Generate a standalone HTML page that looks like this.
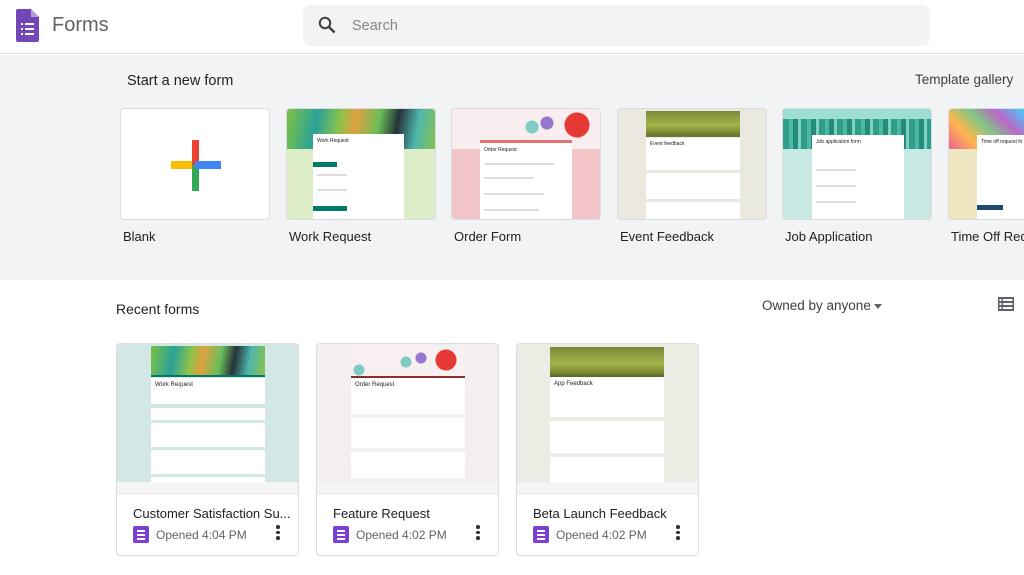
<!DOCTYPE html>
<html><head><meta charset="utf-8"><style>
*{margin:0;padding:0;box-sizing:border-box}
body{width:1024px;height:575px;overflow:hidden;background:#fff;font-family:"Liberation Sans",Arial,sans-serif;position:relative;color:#202124}
.a{position:absolute}
.tc{position:absolute;top:108px;width:150px;height:112px;border-radius:4px;overflow:hidden;border:1px solid #dadce0;background:#fff}
.tl{position:absolute;top:229px;font-size:13px;color:#202124}
.paper{position:absolute;background:#fff}
.ln{position:absolute;height:2px;background:#ddd}
.rc{position:absolute;top:343px;width:183px;height:213px;border:1px solid #dadce0;border-radius:4px;overflow:hidden;background:#fff}
.rt{position:absolute;left:0;top:0;width:100%;height:138px}
.strip{position:absolute;left:0;top:138px;width:100%;height:12px;background:#f5f5f5;border-bottom:1px solid #e8e8e8}
.rn{position:absolute;left:16px;top:162px;font-size:13px;color:#202124;white-space:nowrap}
.ic{position:absolute;left:16px;top:182px;width:16px;height:17px;background:#7b3fd4;border-radius:2px}
.ic i{position:absolute;left:4px;width:8px;height:2px;background:#fff}
.op{position:absolute;left:39px;top:184px;font-size:12px;color:#5f6368}
.dots{position:absolute;left:159px;top:181px;width:4px}
.dots b{display:block;width:3.5px;height:3.5px;border-radius:50%;background:#333;margin-bottom:2px}
</style></head><body>
<div class="a" style="left:0;top:0;width:1024px;height:54px;border-bottom:1px solid #e0e0e0"></div>
<svg class="a" style="left:16px;top:9px" width="23" height="33" viewBox="0 0 23 33"><path d="M2 0h13l8 8v23a2 2 0 0 1-2 2H2a2 2 0 0 1-2-2V2a2 2 0 0 1 2-2z" fill="#7248b9"/><path d="M15 0v8h8z" fill="#b39ddb"/><g fill="#fff"><rect x="5" y="14" width="2" height="2"/><rect x="9" y="14" width="9" height="2"/><rect x="5" y="19" width="2" height="2"/><rect x="9" y="19" width="9" height="2"/><rect x="5" y="24" width="2" height="2"/><rect x="9" y="24" width="9" height="2"/></g></svg>
<div class="a" style="left:52px;top:14px;font-size:20px;color:#5f6368">Forms</div>
<div class="a" style="left:303px;top:5px;width:627px;height:41px;background:#f1f3f4;border-radius:8px"></div>
<svg class="a" style="left:318px;top:16px" width="18" height="18" viewBox="0 0 18 18"><circle cx="7" cy="7" r="5.2" fill="none" stroke="#3c4043" stroke-width="2"/><path d="M11 11l5.5 5.5" stroke="#3c4043" stroke-width="2.4"/></svg>
<div class="a" style="left:352px;top:18px;font-size:14.5px;color:#80868b">Search</div>
<div class="a" style="left:0;top:55px;width:1024px;height:225px;background:#f1f3f4"></div>
<div class="a" style="left:127px;top:73px;font-size:14.5px;color:#202124">Start a new form</div>
<div class="a" style="left:915px;top:72px;font-size:13.5px;color:#3c4043">Template gallery</div>

<div class="tc" style="left:120px">
<div class="a" style="left:71px;top:31px;width:7px;height:25px;background:#ea4335"></div>
<div class="a" style="left:71px;top:56px;width:7px;height:26px;background:#34a853"></div>
<div class="a" style="left:50px;top:52px;width:21px;height:8px;background:#fbbc04"></div>
<div class="a" style="left:74px;top:52px;width:26px;height:8px;background:#4285f4"></div>
</div>
<div class="tl" style="left:123px">Blank</div>

<div class="tc" style="left:286px;background:#dcedc8">
<div class="a" style="left:0;top:0;width:150px;height:40px;background:linear-gradient(100deg,#7cc243 0,#2aa198 20%,#8bc34a 35%,#e0a040 45%,#6bbf59 60%,#263238 72%,#4db6ac 85%,#8bc34a 100%)"></div>
<div class="paper" style="left:26px;top:25px;width:91px;height:90px"><div class="a" style="left:4px;top:4px;font-size:5px">Work Request</div><div class="a" style="left:0;top:28px;width:24px;height:5px;background:#00796b"></div><div class="ln" style="left:4px;top:40px;width:30px"></div><div class="ln" style="left:4px;top:55px;width:30px"></div><div class="a" style="left:0;top:72px;width:34px;height:5px;background:#00796b"></div></div>
</div>
<div class="tl" style="left:289px">Work Request</div>

<div class="tc" style="left:451px;background:#f2c6c8">
<div class="a" style="left:0;top:0;width:150px;height:40px;background:radial-gradient(circle at 125px 16px,#e53935 0 12px,transparent 13px),radial-gradient(circle at 80px 18px,#80cbc4 0 6px,transparent 7px),radial-gradient(circle at 95px 14px,#9575cd 0 6px,transparent 7px),#f8eef0"></div>
<div class="a" style="left:28px;top:31px;width:92px;height:3px;background:#e57373"></div>
<div class="paper" style="left:28px;top:34px;width:92px;height:80px"><div class="a" style="left:4px;top:4px;font-size:5px">Order Request</div><div class="ln" style="left:4px;top:20px;width:70px"></div><div class="ln" style="left:4px;top:34px;width:50px"></div><div class="ln" style="left:4px;top:50px;width:60px"></div><div class="ln" style="left:4px;top:66px;width:55px"></div></div>
</div>
<div class="tl" style="left:454px">Order Form</div>

<div class="tc" style="left:617px;background:#ebe9df">
<div class="a" style="left:28px;top:2px;width:94px;height:24px;background:linear-gradient(180deg,#7a8a3a,#a4b54a 60%,#6b7a2c)"></div>
<div class="a" style="left:28px;top:26px;width:94px;height:2px;background:#6b7a2c"></div>
<div class="paper" style="left:28px;top:29px;width:94px;height:32px"><div class="a" style="left:4px;top:3px;font-size:5px">Event feedback</div></div>
<div class="paper" style="left:28px;top:64px;width:94px;height:26px"></div>
<div class="paper" style="left:28px;top:93px;width:94px;height:20px"></div>
</div>
<div class="tl" style="left:620px">Event Feedback</div>

<div class="tc" style="left:782px;background:#c8e8e3">
<div class="a" style="left:0;top:0;width:150px;height:40px;background:repeating-linear-gradient(90deg,#2e9e8a 0 6px,#4db6a4 6px 10px,#238c78 10px 15px,#7fd0c0 15px 18px)"></div>
<div class="a" style="left:0;top:0;width:150px;height:10px;background:#9fded2"></div>
<div class="paper" style="left:29px;top:26px;width:92px;height:90px"><div class="a" style="left:4px;top:4px;font-size:5px">Job application form</div><div class="ln" style="left:4px;top:34px;width:40px"></div><div class="ln" style="left:4px;top:50px;width:40px"></div><div class="ln" style="left:4px;top:66px;width:40px"></div></div>
</div>
<div class="tl" style="left:785px">Job Application</div>

<div class="tc" style="left:948px;width:90px;background:#efe6c2">
<div class="a" style="left:0;top:0;width:90px;height:40px;background:linear-gradient(45deg,#f06292,#ffb74d 25%,#81c784 45%,#ba68c8 65%,#4fc3f7 85%,#e57373)"></div>
<div class="paper" style="left:28px;top:26px;width:62px;height:90px"><div class="a" style="left:4px;top:4px;font-size:5px;white-space:nowrap">Time off request fo</div><div class="a" style="left:0;top:70px;width:26px;height:5px;background:#1e4a6b"></div></div>
</div>
<div class="tl" style="left:951px;white-space:nowrap">Time Off Req</div>

<div class="a" style="left:116px;top:301px;font-size:14px;color:#202124">Recent forms</div>
<div class="a" style="left:762px;top:298px;font-size:13.5px;color:#3c4043">Owned by anyone</div>
<div class="a" style="left:874px;top:304px;border-left:4.5px solid transparent;border-right:4.5px solid transparent;border-top:5px solid #5f6368"></div>
<svg class="a" style="left:998px;top:297px" width="16" height="14" viewBox="0 0 16 14"><rect x="0" y="0" width="16" height="14" fill="#5f6368"/><g fill="#fff"><rect x="1.5" y="2" width="2" height="2"/><rect x="5" y="2" width="9.5" height="2"/><rect x="1.5" y="6" width="2" height="2"/><rect x="5" y="6" width="9.5" height="2"/><rect x="1.5" y="10" width="2" height="2"/><rect x="5" y="10" width="9.5" height="2"/></g></svg>

<div class="rc" style="left:116px">
<div class="rt" style="background:#d3e8e5"></div>
<div class="a" style="left:34px;top:2px;width:114px;height:29px;background:linear-gradient(100deg,#7cc243 0,#2aa198 20%,#8bc34a 35%,#e0a040 45%,#6bbf59 60%,#263238 72%,#4db6ac 85%,#8bc34a 100%)"></div>
<div class="a" style="left:34px;top:31px;width:114px;height:2px;background:#00796b"></div>
<div class="paper" style="left:34px;top:34px;width:114px;height:26px"><div class="a" style="left:4px;top:4px;font-size:6px">Work Request</div></div>
<div class="paper" style="left:34px;top:64px;width:114px;height:12px"></div>
<div class="paper" style="left:34px;top:79px;width:114px;height:24px"></div>
<div class="paper" style="left:34px;top:106px;width:114px;height:24px"></div>
<div class="paper" style="left:34px;top:133px;width:114px;height:5px"></div>
<div class="strip"></div>
<div class="rn">Customer Satisfaction Su...</div>
<div class="ic"><i style="top:4px"></i><i style="top:8px"></i><i style="top:12px"></i></div>
<div class="op">Opened 4:04 PM</div>
<div class="dots"><b></b><b></b><b></b></div>
</div>

<div class="rc" style="left:316px">
<div class="rt" style="background:#f3efee"></div>
<div class="a" style="left:34px;top:2px;width:114px;height:30px;background:radial-gradient(circle at 95px 14px,#e53935 0 10px,transparent 11px),radial-gradient(circle at 55px 16px,#80cbc4 0 5px,transparent 6px),radial-gradient(circle at 70px 12px,#9575cd 0 5px,transparent 6px),radial-gradient(circle at 8px 24px,#80cbc4 0 5px,transparent 6px),#f8f0f0"></div>
<div class="a" style="left:34px;top:32px;width:114px;height:2px;background:#8b2d2d"></div>
<div class="paper" style="left:34px;top:34px;width:114px;height:36px"><div class="a" style="left:4px;top:4px;font-size:6px">Order Request</div></div>
<div class="paper" style="left:34px;top:74px;width:114px;height:30px"></div>
<div class="paper" style="left:34px;top:108px;width:114px;height:26px"></div>
<div class="strip"></div>
<div class="rn">Feature Request</div>
<div class="ic"><i style="top:4px"></i><i style="top:8px"></i><i style="top:12px"></i></div>
<div class="op">Opened 4:02 PM</div>
<div class="dots"><b></b><b></b><b></b></div>
</div>

<div class="rc" style="left:516px">
<div class="rt" style="background:#ecebe4"></div>
<div class="a" style="left:33px;top:3px;width:114px;height:28px;background:linear-gradient(180deg,#7a8a3a,#a4b54a 60%,#6b7a2c)"></div>
<div class="a" style="left:33px;top:31px;width:114px;height:2px;background:#556b2f"></div>
<div class="paper" style="left:33px;top:33px;width:114px;height:40px"><div class="a" style="left:4px;top:4px;font-size:6px">App Feedback</div></div>
<div class="paper" style="left:33px;top:77px;width:114px;height:32px"></div>
<div class="paper" style="left:33px;top:113px;width:114px;height:25px"></div>
<div class="strip"></div>
<div class="rn">Beta Launch Feedback</div>
<div class="ic"><i style="top:4px"></i><i style="top:8px"></i><i style="top:12px"></i></div>
<div class="op">Opened 4:02 PM</div>
<div class="dots"><b></b><b></b><b></b></div>
</div>
</body></html>
